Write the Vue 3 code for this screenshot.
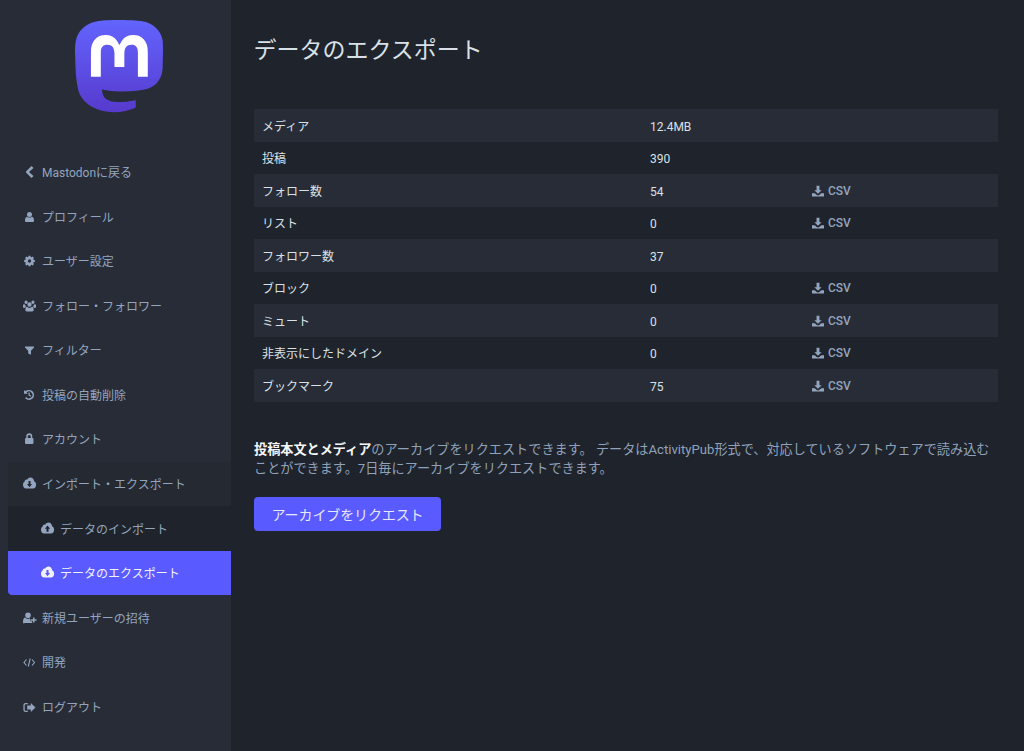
<script setup>
const cloudT = 'translate(0 -1.2) scale(.93 1.2)'
const icons = {
  back: { d: 'M8.500 1 10.500 3 6 7l4.500 4-2 2L3 7.500v-1Z' },
  user: { d: 'M6.500 1.900a2.500 2.500 0 1 1 0 5 2.500 2.500 0 0 1 0-5ZM2 10.500C2 8.500 2.700 7 4 6.700 4.700 7.300 5.500 7.600 6.500 7.600s1.800-.3 2.500-.9C10.300 7 11 8.500 11 10.500c0 1-.6 1.600-1.400 1.600H3.400C2.600 12.100 2 11.500 2 10.500Z' },
  cog: { t: 'translate(6.500 7) scale(.76) translate(-7 -7)', d: 'M5.800 0h2.400l.4 1.700 1 .4 1.500-.9 1.700 1.700-.9 1.500.4 1 1.700.4v2.400l-1.700.4-.4 1 .9 1.500-1.700 1.700-1.500-.9-1 .4-.4 1.700H5.800l-.4-1.700-1-.4-1.500.9-1.700-1.700.9-1.500-.4-1L0 8.200V5.800l1.700-.4.4-1-.9-1.500 1.700-1.700 1.500.9 1-.4ZM7 4.800a2.200 2.200 0 1 0 0 4.400 2.200 2.200 0 0 0 0-4.400Z' },
  users: { t: 'scale(.93 1)', d: 'M3.300 1.500a1.700 1.700 0 1 1 0 3.400 1.700 1.700 0 0 1 0-3.400ZM10.700 1.500a1.700 1.700 0 1 1 0 3.400 1.700 1.700 0 0 1 0-3.400ZM7 3.200a2.300 2.300 0 1 1 0 4.600 2.300 2.300 0 0 1 0-4.600ZM0 8V6.500C0 5.700.6 5.300 1.300 5.300c.4 0 .8.200 1.200.4-.1.800.3 1.700.9 2.300C2.600 8.100 2 8.500 1.700 9 .8 9 0 8.800 0 8ZM14 8c0 .8-.8 1-1.700 1-.3-.5-.9-.9-1.700-1 .6-.6 1-1.500.9-2.300.4-.2.800-.4 1.200-.4.700 0 1.300.4 1.300 1.200ZM4.300 7.800C5 8.500 6 8.900 7 8.900s2-.4 2.700-1.100c1.300.1 1.800 1.300 1.800 3 0 1-.6 1.700-1.500 1.700H4c-.9 0-1.500-.7-1.500-1.700 0-1.700.5-2.900 1.800-3Z' },
  filter: { d: 'M2 3.500h9v1L8 7.800v3.900L5.200 10.400V7.800L2 4.500Z' },
  history: { d: 'M6 2a5 5 0 1 1-3.900 8.100l1.200-1.100A3.400 3.400 0 1 0 3.600 4.600L4.800 5.800H1V2L2.300 3.300A5 5 0 0 1 6 2ZM5.500 4.500h1.200v2.300l1.500 1-.6 1L5.500 7.500Z' },
  lock: { d: 'M6.250 1.300a3 3 0 0 1 3 3V6h.3c.5 0 .9.4.9.9v4.200c0 .5-.4.9-.9.9H2.950c-.5 0-.9-.4-.9-.9V6.900c0-.5.4-.9.9-.9h.3V4.300a3 3 0 0 1 3-3ZM6.250 2.900a1.500 1.500 0 0 0-1.500 1.500V6h3V4.400A1.500 1.500 0 0 0 6.250 2.900Z' },
  down: { t: cloudT, d: 'M8.200 1.500c1.900 0 3.400 1.300 3.800 3.100 1.200.4 2.100 1.500 2.100 2.900 0 1.800-1.400 3.100-3.200 3.100H3.200C1.400 10.600 0 9.300 0 7.500c0-1.300.7-2.300 1.800-2.800.1-.9.900-1.600 1.800-1.600.3 0 .6.100.9.200.7-1.100 2.100-1.800 3.700-1.800ZM5.900 4.300v2.500H4.300L7 9.500l2.700-2.700H8.100V4.300Z' },
  up: { t: cloudT, d: 'M8.200 1.500c1.900 0 3.400 1.300 3.800 3.100 1.200.4 2.100 1.500 2.100 2.900 0 1.800-1.400 3.100-3.200 3.100H3.200C1.400 10.600 0 9.300 0 7.500c0-1.300.7-2.300 1.800-2.800.1-.9.900-1.600 1.800-1.600.3 0 .6.100.9.200.7-1.100 2.100-1.800 3.700-1.800ZM7 3.900 4.300 6.600h1.600v2.500h2.200V6.600h1.600Z' },
  invite: { d: 'M5 1.500a2.800 2.800 0 1 1 0 5.600 2.800 2.800 0 0 1 0-5.600ZM2 6.600C2.800 7.400 3.800 7.900 5 7.900c.8 0 1.500-.2 2-.6v.9H7.500v2H9.200v1.700H1.500C.6 12.900 0 12.300 0 11.300 0 9 .6 6.900 2 6.600ZM10 6.500h1.500v1.700h2v1.500h-2v1.700H10V9.700H8V8.200h2Z' },
  signout: { d: 'M4.800 3v1.300H2.600c-.5 0-.9.4-.9.900v4.600c0 .5.4.9.9.9h2.200V12H2.600C1.300 12 .4 11.100.4 9.800V5.200C.4 3.900 1.300 3 2.600 3ZM7.800 3 12.500 7.500 7.800 12V9.500H4.200V5.500h3.600Z' },
  download: { d: 'M5.300 1h3.400v5h2.600L7 10.300 2.700 6h2.600ZM0 9.600h3.200L5.500 11.800c.8.700 2.200.7 3 0L10.800 9.600H14v3.400c0 .3-.2.500-.5.500H.5c-.3 0-.5-.2-.5-.5Z' }
}
const menu = [
  { icon: 'back', label: 'Mastodonに戻る' },
  { icon: 'user', label: 'プロフィール' },
  { icon: 'cog', label: 'ユーザー設定' },
  { icon: 'users', label: 'フォロー・フォロワー' },
  { icon: 'filter', label: 'フィルター' },
  { icon: 'history', label: '投稿の自動削除' },
  { icon: 'lock', label: 'アカウント' }
]
const menuEnd = [
  { icon: 'invite', label: '新規ユーザーの招待' },
  { icon: 'code', label: '開発' },
  { icon: 'signout', label: 'ログアウト' }
]
const rows = [
  ['メディア', '12.4MB', false],
  ['投稿', '390', false],
  ['フォロー数', '54', true],
  ['リスト', '0', true],
  ['フォロワー数', '37', false],
  ['ブロック', '0', true],
  ['ミュート', '0', true],
  ['非表示にしたドメイン', '0', true],
  ['ブックマーク', '75', true]
]
</script>

<template>
  <div class="page">
    <aside class="sidebar">
      <div class="logo-wrap">
        <svg class="logo" viewBox="0 0 74 79" xmlns="http://www.w3.org/2000/svg">
          <defs>
            <linearGradient id="mlogo" x1="37" y1="0" x2="37" y2="79" gradientUnits="userSpaceOnUse">
              <stop offset="0" stop-color="#6364FF" />
              <stop offset="1" stop-color="#563ACC" />
            </linearGradient>
          </defs>
          <path fill="url(#mlogo)" d="M73.700 18C72.600 9.600 65.200 3 56.400 1.800 54.900 1.600 49.400.8 36.400.8H36.300C23.300.8 20.500 1.600 19.100 1.800 10.600 3 2.800 8.900.9 17.400 0 21.500-.1 26.100.1 30.300.3 36.400.4 42.500.9 48.500 1.300 52.500 2 56.500 2.900 60.400 4.700 67.600 12 73.600 19.100 76.100 26.700 78.700 34.900 79.100 42.700 77.300 43.600 77.100 44.400 76.900 45.300 76.600 47.200 76 49.400 75.400 51.100 74.200V68.200C45.900 69.200 40.700 69.800 35.600 69.800 26.700 69.800 24.300 65.700 23.600 63.900 23.100 62.400 22.700 60.900 22.600 59.300 27.700 60.300 32.800 60.900 37.900 60.900 39.100 60.900 40.300 60.900 41.500 60.900 46.700 60.700 52 60.500 57.100 59.500 57.200 59.500 57.300 59.400 57.400 59.400 65.400 57.900 72.900 53.200 73.700 41.300 73.700 40.800 73.800 36.400 73.800 35.900 73.800 34.200 74.300 24.200 73.700 18Z" />
          <path fill="#fff" d="M61.200 27.500V48.500H52.900V28.100C52.900 23.800 51.100 21.600 47.500 21.600 43.500 21.600 41.500 24.200 41.500 29.300V40.400H33.200V29.300C33.200 24.200 31.200 21.600 27.200 21.600 23.500 21.600 21.700 23.800 21.700 28.100V48.500H13.400V27.500C13.400 23.200 14.500 19.800 16.700 17.300 19 14.700 22 13.500 25.700 13.500 30 13.500 33.200 15.100 35.400 18.400L37.300 21.800 39.300 18.400C41.400 15.100 44.700 13.500 49 13.500 52.700 13.500 55.700 14.700 57.900 17.300 60.200 19.800 61.200 23.200 61.200 27.500Z" />
        </svg>
      </div>
      <nav class="menu">
        <a v-for="m in menu" :key="m.label" class="item">
          <svg class="ic" viewBox="0 0 14 14"><path :d="icons[m.icon].d" :transform="icons[m.icon].t" fill-rule="evenodd" /></svg>
          <span>{{ m.label }}</span>
        </a>
        <div class="group">
          <a class="item group-head">
            <svg class="ic" viewBox="0 0 14 14"><path :d="icons.down.d" :transform="icons.down.t" fill-rule="evenodd" /></svg>
            <span>インポート・エクスポート</span>
          </a>
          <div class="sub">
            <a class="item sub-item">
              <svg class="ic" viewBox="0 0 14 14"><path :d="icons.up.d" :transform="icons.up.t" fill-rule="evenodd" /></svg>
              <span>データのインポート</span>
            </a>
            <a class="item sub-item active">
              <svg class="ic" viewBox="0 0 14 14"><path :d="icons.down.d" :transform="icons.down.t" fill-rule="evenodd" /></svg>
              <span>データのエクスポート</span>
            </a>
          </div>
        </div>
        <a v-for="m in menuEnd" :key="m.label" class="item">
          <svg v-if="m.icon === 'code'" class="ic" viewBox="0 0 14 14">
            <path d="M3.500 4.500 1 7.500l2.500 3M9 4.500l2.500 3-2.500 3M7.200 3.500 5.300 11.500" fill="none" stroke="currentColor" stroke-width="1.100" />
          </svg>
          <svg v-else class="ic" viewBox="0 0 14 14"><path :d="icons[m.icon].d" fill-rule="evenodd" /></svg>
          <span>{{ m.label }}</span>
        </a>
      </nav>
    </aside>
    <main class="content">
      <h1 class="title">データのエクスポート</h1>
      <table class="table">
        <colgroup>
          <col class="c1" /><col class="c2" /><col class="c3" />
        </colgroup>
        <tbody>
          <tr v-for="r in rows" :key="r[0]">
            <td>{{ r[0] }}</td>
            <td class="val">{{ r[1] }}</td>
            <td>
              <a v-if="r[2]" class="csv">
                <svg class="dl" viewBox="0 0 14 14"><path :d="icons.download.d" /></svg>
                CSV
              </a>
            </td>
          </tr>
        </tbody>
      </table>
      <p class="hint"><strong>投稿本文とメディア</strong>のアーカイブをリクエストできます。 データはActivityPub形式で、対応しているソフトウェアで読み込むことができます。7日毎にアーカイブをリクエストできます。</p>
      <button class="btn">アーカイブをリクエスト</button>
    </main>
  </div>
</template>

<style>
html, body { margin: 0; background: #1f232b; }
</style>

<style scoped>
.page {
  display: flex;
  height: 751px;
  overflow: hidden;
  background: #1f232b;
  font-family: Roboto, "Noto Sans CJK JP", sans-serif;
}
.sidebar {
  width: 231px;
  flex: none;
  background: #282c37;
}
.logo-wrap {
  display: flex;
  justify-content: center;
  padding: 19px 0 36.700px;
  margin-left: 7px;
}
.logo { width: 88px; height: 94px; display: block; }
.menu { display: flex; flex-direction: column; padding-left: 7.500px; }
.item {
  display: flex;
  align-items: center;
  gap: 5px;
  height: 44.580px;
  box-sizing: border-box;
  padding-left: 15.500px;
  font-size: 12px;
  line-height: 14px;
  color: #93a5be;
}
.item span { padding-top: 2px; }
.ic {
  width: 14px;
  height: 14px;
  flex: none;
  fill: currentColor;
}
.group { background: #252932; }
.sub { background: #1f232b; }
.sub-item { padding-left: 33.500px; }
.active {
  background: #595aff;
  color: #f2f2ff;
  border-bottom-left-radius: 4px;
}
.content {
  flex: 1;
  min-width: 0;
  padding: 0 26px 0 23px;
}
.title {
  margin: 0 0 0 -0.500px;
  padding-top: 35px;
  height: 43px;
  font-size: 23px;
  line-height: 31px;
  font-weight: 400;
  color: #d9e1e8;
}
.table {
  width: 744px;
  margin-top: 31px;
  border-collapse: collapse;
  table-layout: fixed;
  font-size: 12px;
  line-height: 18px;
  color: #d9e1e8;
}
.c1 { width: 388px; }
.c2 { width: 162px; }
.c3 { width: 194px; }
.table td {
  height: 32.500px;
  padding: 3px 8px 0;
  box-sizing: border-box;
}
.table tr:nth-child(odd) { background: #282c37; }
.csv {
  display: inline-flex;
  align-items: center;
  gap: 4px;
  color: #93a5be;
  font-weight: 500;
}
.dl { width: 12px; height: 12px; fill: currentColor; }
.hint {
  margin: 38px 0 0;
  font-size: 13.150px;
  line-height: 19.500px;
  color: #90a2bb;
}
.hint strong { color: #f4f6f8; font-weight: 700; }
.btn {
  display: block;
  margin-top: 18px;
  width: 187px;
  height: 34px;
  padding: 0;
  border: 0;
  border-radius: 4px;
  background: #595aff;
  color: #e8e8ff;
  font-family: inherit;
  font-size: 14px;
  letter-spacing: -0.120px;
}
</style>
